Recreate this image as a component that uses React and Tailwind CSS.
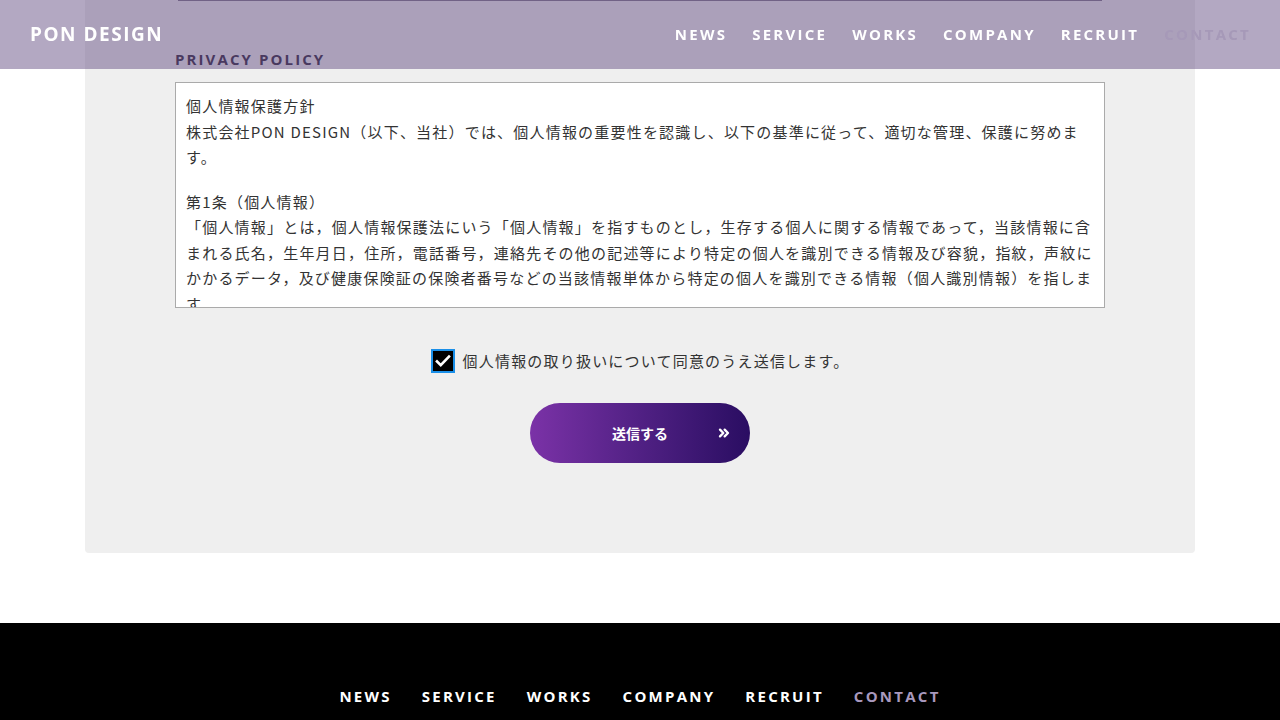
import { ChevronsRight } from 'lucide-react'

const nav = ['NEWS', 'SERVICE', 'WORKS', 'COMPANY', 'RECRUIT']
const jp = { fontFamily: '"Noto Sans CJK JP", "Noto Sans", sans-serif' }
const en = { fontFamily: '"Open Sans", "Noto Sans CJK JP", sans-serif' }

function Header() {
    return (
        <header className="fixed top-0 left-0 right-0 h-[69px] bg-[rgba(103,81,133,0.5)] flex items-center justify-between pl-[30px] pr-[29px] z-10" style={en}>
            <div className="text-white text-[19px] font-bold tracking-[0.08em]">PON DESIGN</div>
            <nav className="flex gap-[25px] text-[15px] font-bold tracking-[0.15em]">
                {nav.map(v => (
                    <span key={v} className="text-white">{v}</span>
                ))}
                <span className="text-[#a699b8]">CONTACT</span>
            </nav>
        </header>
    )
}

export default function App() {
    return (
        <div className="min-h-[720px] bg-white">
            <Header />
            <div className="mx-[85px] bg-[#efefef] rounded-b-[4px] pb-[90px]">
                <div className="mx-[93px] h-px bg-[#7a7286]" />
                <div className="px-[90px] pt-[49px]">
                    <h2 className="text-[15px] font-bold tracking-[0.14em] text-[#2a2139] leading-[18px]" style={en}>PRIVACY POLICY</h2>
                    <div className="mt-[14px] h-[226px] overflow-hidden bg-white border border-[#aaa] px-[10px] pt-[10px] text-[15px] leading-[25.5px] tracking-[0.08em] text-[#333]" style={jp}>
                        <p>
                            個人情報保護方針<br />
                            株式会社PON DESIGN（以下、当社）では、個人情報の重要性を認識し、以下の基準に従って、適切な管理、保護に努めま<br />
                            す。
                        </p>
                        <p className="mt-[19px]">
                            第1条（個人情報）<br />
                            「個人情報」とは，個人情報保護法にいう「個人情報」を指すものとし，生存する個人に関する情報であって，当該情報に含<br />
                            まれる氏名，生年月日，住所，電話番号，連絡先その他の記述等により特定の個人を識別できる情報及び容貌，指紋，声紋に<br />
                            かかるデータ，及び健康保険証の保険者番号などの当該情報単体から特定の個人を識別できる情報（個人識別情報）を指しま<br />
                            す。
                        </p>
                    </div>
                </div>
                <div className="flex justify-center items-center gap-[8px] mt-[41px]" style={jp}>
                    <span className="w-[24px] h-[24px] border-2 border-[#1a8fe8] bg-black flex items-center justify-center">
                        <svg viewBox="0 0 24 24" className="w-[18px] h-[18px]" fill="none" stroke="white" strokeWidth="3.5" strokeLinecap="square">
                            <path d="M4 12.5l5 5L20 6" />
                        </svg>
                    </span>
                    <span className="text-[15px] tracking-[0.08em] text-[#333]">個人情報の取り扱いについて同意のうえ送信します。</span>
                </div>
                <div className="flex justify-center mt-[30px]">
                    <button className="relative w-[220px] h-[60px] rounded-full bg-gradient-to-r from-[#7b32a7] to-[#2a0d62] text-white text-[14px] font-bold" style={jp}>
                        送信する
                        <ChevronsRight className="absolute right-[18px] top-1/2 -translate-y-1/2 w-[16px] h-[16px]" strokeWidth={3.5} />
                    </button>
                </div>
            </div>
            <footer className="mt-[70px] bg-black pt-[62px] pb-[40px]" style={en}>
                <nav className="flex justify-center gap-[30px] text-[15px] font-bold tracking-[0.15em]">
                    {nav.map(v => (
                        <span key={v} className="text-white">{v}</span>
                    ))}
                    <span className="text-[#a898bd]">CONTACT</span>
                </nav>
            </footer>
        </div>
    )
}
